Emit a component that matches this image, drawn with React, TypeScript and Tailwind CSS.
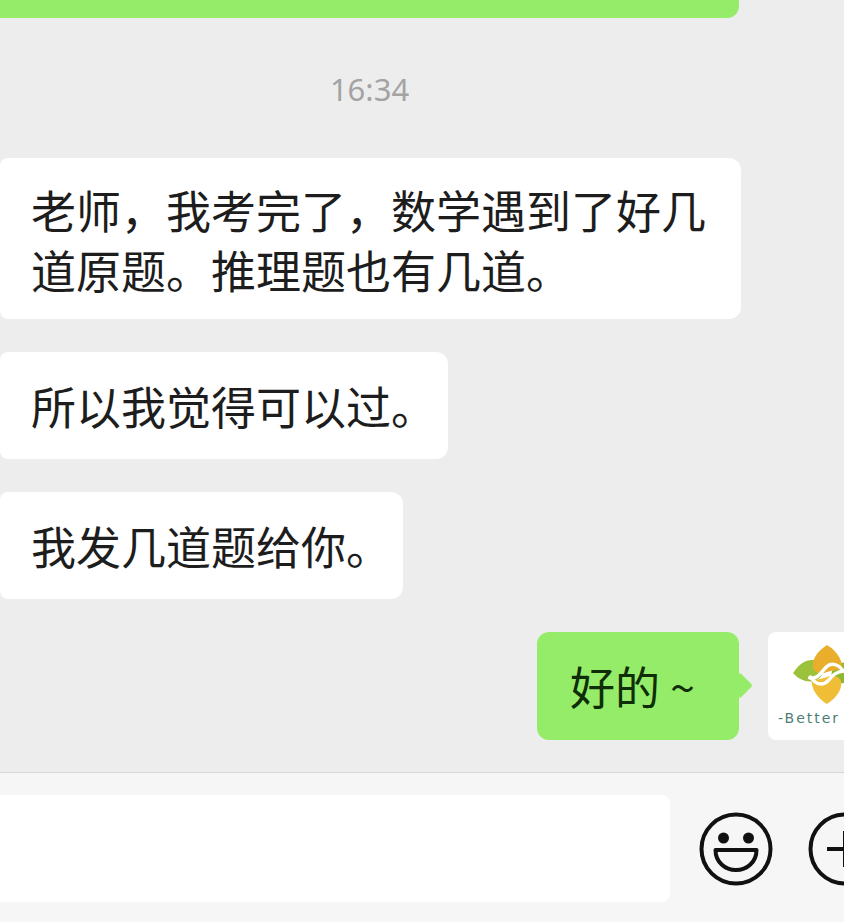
import React from "react";

const cjk = "font-['Noto_Sans_CJK_SC','Noto_Sans',sans-serif]";

const Bubble = ({ text, className }: { text: string; className: string }) => (
  <div className={`bg-white rounded-r-xl rounded-l-lg pl-[31px] pr-[12px] text-[45px] text-[#1d1d1d] shrink-0 ${className}`}>
    {text}
  </div>
);

const Logo = () => (
  <svg viewBox="0 0 70 62" className="w-[68px] h-[60px] shrink-0">
    {/* green side leaves */}
    <path d="M0 29 C7 18 15 14 24 16 C31 18 33 26 29 32 C24 40 9 40 0 29Z" fill="#9cc13a" />
    <path d="M70 29 C63 18 55 16 46 20 C39 24 38 32 42 37 C47 42 61 40 70 29Z" fill="#8fb832" />
    {/* orange top and bottom leaves */}
    <path d="M35 0 C24 7 18 17 21 25 C25 30 30 30 35 28 C40 26 47 26 51 25 C51 15 45 6 35 0Z" fill="#e9ae2c" />
    <path d="M35 61 C46 54 52 44 49 36 C45 31 40 31 35 33 C30 35 23 36 19 36 C19 46 25 55 35 61Z" fill="#f0bd37" />
    {/* white S bands */}
    <path d="M17 34 C25 36 29 28 35 22 C40 18 47 20 52 27" fill="none" stroke="#fff" strokeWidth="3.5" strokeLinecap="round" />
    <path d="M18 33 C24 42 31 42 36 37 C41 31 45 27 53 27" fill="none" stroke="#fff" strokeWidth="3.5" strokeLinecap="round" />
  </svg>
);

const Smile = () => (
  <svg viewBox="0 0 74 74" className="w-[74px] h-[74px] shrink-0" fill="none" stroke="#111" strokeWidth="4">
    <circle cx="37" cy="37" r="34.5" />
    <circle cx="24.5" cy="26" r="5.5" fill="#111" stroke="none" />
    <circle cx="49.5" cy="26" r="5.5" fill="#111" stroke="none" />
    <path d="M16.5 38 H57.5 C57.5 50 48 58 37 58 C26 58 16.5 50 16.5 38Z" strokeLinejoin="round" />
  </svg>
);

const Plus = () => (
  <svg viewBox="0 0 74 74" className="w-[74px] h-[74px] shrink-0" fill="none" stroke="#111" strokeWidth="4">
    <circle cx="37" cy="37" r="34.5" />
    <path d="M19 37 H55 M37 19 V55" />
  </svg>
);

export default function App() {
  return (
    <div className={`w-[844px] h-[922px] overflow-hidden flex flex-col bg-[#ededed] ${cjk}`}>
      <div className="flex-1 flex flex-col min-h-0">
        <div className="w-[739px] h-[18px] bg-[#95ec69] rounded-br-xl shrink-0" />

        <div className="h-[140px] flex items-center shrink-0">
          <span className="w-[739px] pt-[2px] text-center text-[31px] text-[#a3a3a3] font-['Noto_Sans',sans-serif]">16:34</span>
        </div>

        <div className="flex flex-col items-start gap-[33px]">
          <Bubble text="老师，我考完了，数学遇到了好几道原题。推理题也有几道。" className="w-[741px] pt-[22px] pb-[20px] leading-[59.5px]" />
          <Bubble text="所以我觉得可以过。" className="py-6 leading-[59px]" />
          <Bubble text="我发几道题给你。" className="py-6 leading-[59px]" />

          <div className="w-full flex items-start gap-[29px] pl-[537px]">
            <div className="relative w-[202px] h-[108px] shrink-0 bg-[#95ec69] rounded-xl flex items-center pl-[33px] text-[45px] text-[#0f2e08]">
              好的 ~
              <div className="absolute right-[-10px] top-[44px] w-[19px] h-[19px] bg-[#95ec69] rotate-45 rounded-[3px]" />
            </div>
            <div className="w-[107px] h-[108px] shrink-0 bg-white rounded-lg flex flex-col items-start pt-[13px]">
              <div className="pl-[25px]">
                <Logo />
              </div>
              <span className="mt-[5px] pl-[10px] text-[14px] leading-4 tracking-[2px] text-[#4d7d78] font-['DejaVu_Sans',sans-serif]">-Better</span>
            </div>
          </div>
        </div>
      </div>

      <div className="h-[150px] shrink-0 border-t border-[#d8d8d8] bg-[#f6f6f6] flex items-center gap-[29px]">
        <div className="w-[670px] h-[107px] mt-[1px] shrink-0 bg-white rounded-r-lg" />
        <div className="flex gap-[35px] shrink-0 mt-[2px]">
          <Smile />
          <Plus />
        </div>
      </div>
    </div>
  );
}
